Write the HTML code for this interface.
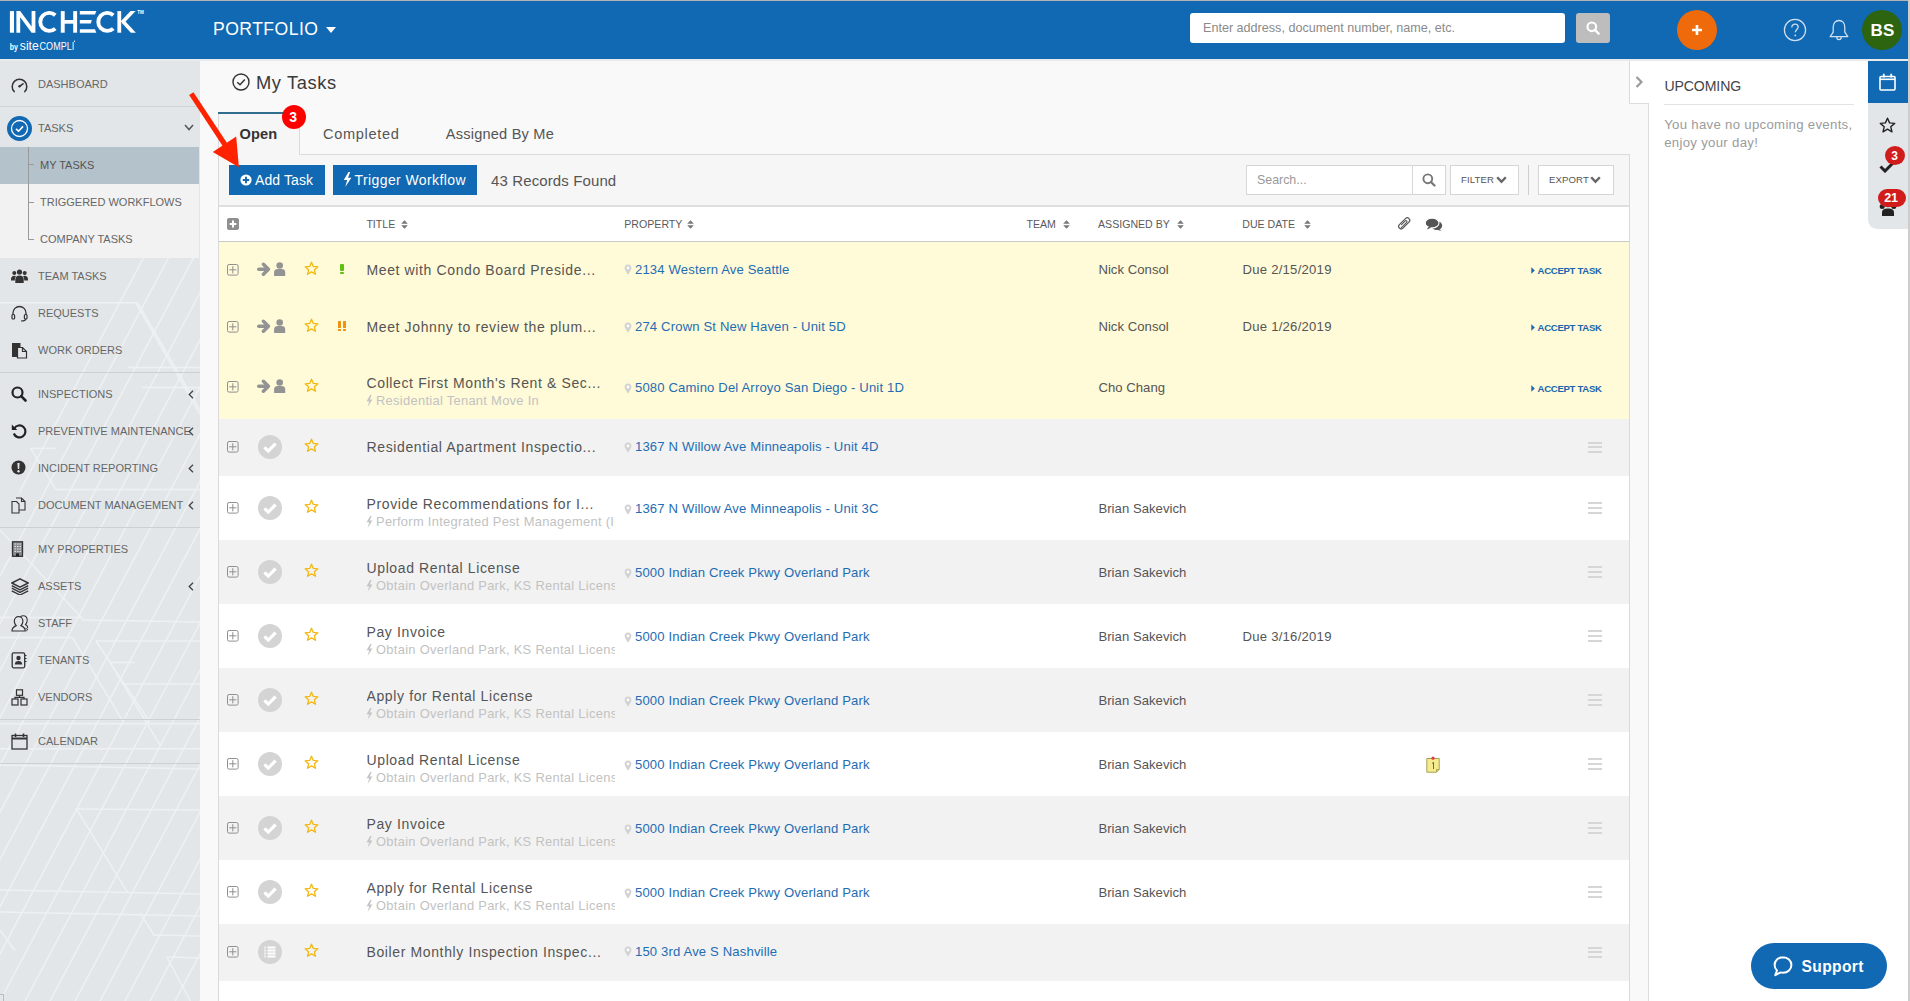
<!DOCTYPE html><html><head><meta charset="utf-8"><style>
*{box-sizing:border-box;margin:0;padding:0}
html,body{width:1910px;height:1001px;overflow:hidden;background:#f9f9f9;font-family:"Liberation Sans",sans-serif;color:#555}
div,span,svg{position:absolute}
.t{white-space:nowrap;line-height:1}
</style></head><body><div style="left:0px;top:0px;width:1910px;height:1px;background:#b4b4b4"></div>
<div style="left:0px;top:1px;width:1908px;height:58px;background:#1168b3"></div>
<div style="left:0px;top:59px;width:1908px;height:2px;background:#e9eaeb"></div>
<div style="left:1908px;top:0px;width:2px;height:1001px;background:#cdcdcd"></div>
<svg style="left:0px;top:0px;" width="150" height="56" viewBox="0 0 150 56"><g fill="#fff"><rect x="9.9" y="11.1" width="4.1" height="21.6"/><path d="M16.4 32.7V11.1H20.2L31.6 26.6V11.1H35.4V32.7H31.6L20.2 17.2V32.7Z"/><rect x="60.8" y="11.1" width="3.9" height="21.6"/><rect x="73.2" y="11.1" width="3.9" height="21.6"/><rect x="64" y="20" width="10" height="3.7"/><path d="M79.8 11.1H96.3L95 14.6H79.8Z"/><path d="M79.8 20H91.8L90.8 23.6H79.8Z"/><path d="M79.8 29.2H95L96.3 32.7H79.8Z"/><path d="M117.4 11.1H121.2V32.7H117.4Z"/><path d="M120.5 21.5L130.6 11.1H135.6L123.5 23.8Z"/><path d="M124.3 20.2L135.9 32.7H130.9L121.8 23Z"/></g><g fill="none" stroke="#fff" stroke-width="3.9"><path d="M55.3 15.2A9 9 0 1 0 55.3 28.6"/><path d="M113.3 15.2A9 9 0 1 0 113.3 28.6"/></g><text x="137.3" y="14.4" font-size="4.6" font-weight="700" fill="#fff" font-family="Liberation Sans">TM</text><text x="9.8" y="50.2" font-size="8.6" font-weight="700" fill="#fff" font-family="Liberation Sans" textLength="8.2" lengthAdjust="spacingAndGlyphs">by</text><text x="19.8" y="49.6" font-size="12.4" fill="#fff" font-family="Liberation Sans" textLength="19" lengthAdjust="spacingAndGlyphs">site</text><text x="39.6" y="49.6" font-size="10.4" fill="#fff" font-family="Liberation Sans" textLength="34.6" lengthAdjust="spacingAndGlyphs">COMPLI</text><circle cx="74.5" cy="41.2" r="0.7" fill="#fff"/></svg>
<span class="t" style="left:213px;top:21.2px;font-size:17.6px;color:#fff;font-weight:400;letter-spacing:0.45px">PORTFOLIO</span>
<svg style="left:326px;top:27px;" width="10" height="6" viewBox="0 0 10 6"><path d="M0 0H10L5 6Z" fill="#fff"/></svg>
<div style="left:1190px;top:13px;width:375px;height:30px;background:#fff;border-radius:3px"></div>
<span class="t" style="left:1203px;top:22.16px;font-size:12.6px;color:#8a8a8a;font-weight:400;">Enter address, document number, name, etc.</span>
<div style="left:1576px;top:13px;width:34px;height:30px;background:#bdbdbd;border-radius:3px"></div>
<svg style="left:1586px;top:21px;" width="14" height="14" viewBox="0 0 14 14"><circle cx="5.8" cy="5.8" r="4.3" stroke="#fff" stroke-width="2.2" fill="none"/><path d="M9 9L12.6 12.6" stroke="#fff" stroke-width="2.4" stroke-linecap="round"/></svg>
<div style="left:1677px;top:10px;width:40px;height:40px;background:#ee6a0a;border-radius:50%"></div>
<svg style="left:1691px;top:24px;" width="12" height="12" viewBox="0 0 12 12"><path d="M6 1V11M1 6H11" stroke="#fff" stroke-width="2.6"/></svg>
<svg style="left:1783px;top:18px;" width="24" height="24" viewBox="0 0 24 24"><circle cx="12" cy="12" r="10.6" stroke="#cfdff0" stroke-width="1.25" fill="none"/><path d="M8.8 9.4C8.8 7.4 10.2 6.2 12 6.2C13.8 6.2 15.2 7.4 15.2 9.1C15.2 11.3 12.3 11.6 12.3 14.2" stroke="#cfdff0" stroke-width="1.3" fill="none"/><circle cx="12.3" cy="17.4" r="0.95" fill="#cfdff0"/></svg>
<svg style="left:1828px;top:19px;" width="22" height="23" viewBox="0 0 22 23"><path d="M11 1.5C7.4 1.5 5.2 4.3 5.2 8.2V13.2L2.2 17.6H19.8L16.8 13.2V8.2C16.8 4.3 14.6 1.5 11 1.5Z" stroke="#cfdff0" stroke-width="1.3" fill="none" stroke-linejoin="round"/><path d="M8.8 18C8.8 19.6 9.8 20.6 11 20.6C12.2 20.6 13.2 19.6 13.2 18" stroke="#cfdff0" stroke-width="1.3" fill="none"/></svg>
<div style="left:1862px;top:10px;width:40px;height:40px;background:#2c6410;border-radius:50%"></div>
<span class="t" style="left:1870.5px;top:22.18px;font-size:17px;color:#fff;font-weight:700;letter-spacing:0.3px">BS</span>
<div style="left:0px;top:61px;width:200px;height:940px;background:#e2e6e9;overflow:hidden"></div>
<svg stroke="#eef1f3" stroke-width="1.5" style="left:0px;top:258px;" width="200" height="743" viewBox="0 258 200 743"><defs><clipPath id="pc"><path d="M139 258H200V1001H0V560L31.8 448Z"/></clipPath></defs><line x1="-450" y1="1001" x2="80" y2="0" clip-path="url(#pc)"/><line x1="-425" y1="1001" x2="105" y2="0" clip-path="url(#pc)"/><line x1="-400" y1="1001" x2="130" y2="0" clip-path="url(#pc)"/><line x1="-375" y1="1001" x2="155" y2="0" clip-path="url(#pc)"/><line x1="-350" y1="1001" x2="180" y2="0" clip-path="url(#pc)"/><line x1="-325" y1="1001" x2="205" y2="0" clip-path="url(#pc)"/><line x1="-300" y1="1001" x2="230" y2="0" clip-path="url(#pc)"/><line x1="-275" y1="1001" x2="255" y2="0" clip-path="url(#pc)"/><line x1="-250" y1="1001" x2="280" y2="0" clip-path="url(#pc)"/><line x1="-225" y1="1001" x2="305" y2="0" clip-path="url(#pc)"/><line x1="-200" y1="1001" x2="330" y2="0" clip-path="url(#pc)"/><line x1="-175" y1="1001" x2="355" y2="0" clip-path="url(#pc)"/><line x1="-150" y1="1001" x2="380" y2="0" clip-path="url(#pc)"/><line x1="-125" y1="1001" x2="405" y2="0" clip-path="url(#pc)"/><line x1="-100" y1="1001" x2="430" y2="0" clip-path="url(#pc)"/><line x1="-75" y1="1001" x2="455" y2="0" clip-path="url(#pc)"/><line x1="-50" y1="1001" x2="480" y2="0" clip-path="url(#pc)"/><line x1="-25" y1="1001" x2="505" y2="0" clip-path="url(#pc)"/><line x1="0" y1="1001" x2="530" y2="0" clip-path="url(#pc)"/><line x1="25" y1="1001" x2="555" y2="0" clip-path="url(#pc)"/><line x1="50" y1="1001" x2="580" y2="0" clip-path="url(#pc)"/><line x1="75" y1="1001" x2="605" y2="0" clip-path="url(#pc)"/><line x1="100" y1="1001" x2="630" y2="0" clip-path="url(#pc)"/><line x1="125" y1="1001" x2="655" y2="0" clip-path="url(#pc)"/><line x1="150" y1="1001" x2="680" y2="0" clip-path="url(#pc)"/><line x1="175" y1="1001" x2="705" y2="0" clip-path="url(#pc)"/><line x1="200" y1="1001" x2="730" y2="0" clip-path="url(#pc)"/><line x1="225" y1="1001" x2="755" y2="0" clip-path="url(#pc)"/><line x1="250" y1="1001" x2="780" y2="0" clip-path="url(#pc)"/><line x1="275" y1="1001" x2="805" y2="0" clip-path="url(#pc)"/><line x1="300" y1="1001" x2="830" y2="0" clip-path="url(#pc)"/><line x1="325" y1="1001" x2="855" y2="0" clip-path="url(#pc)"/><line x1="350" y1="1001" x2="880" y2="0" clip-path="url(#pc)"/><line x1="375" y1="1001" x2="905" y2="0" clip-path="url(#pc)"/><line x1="400" y1="1001" x2="930" y2="0" clip-path="url(#pc)"/><line x1="425" y1="1001" x2="955" y2="0" clip-path="url(#pc)"/><line x1="450" y1="1001" x2="980" y2="0" clip-path="url(#pc)"/><line x1="475" y1="1001" x2="1005" y2="0" clip-path="url(#pc)"/><line x1="500" y1="1001" x2="1030" y2="0" clip-path="url(#pc)"/><line x1="525" y1="1001" x2="1055" y2="0" clip-path="url(#pc)"/><line x1="550" y1="1001" x2="1080" y2="0" clip-path="url(#pc)"/><line x1="575" y1="1001" x2="1105" y2="0" clip-path="url(#pc)"/><line x1="0" y1="302.7" x2="137.7" y2="302.7" /><line x1="128" y1="367.6" x2="200" y2="367.6" /><line x1="141.7" y1="387.5" x2="200" y2="387.5" /><line x1="30" y1="448.4" x2="55.6" y2="448.4" /><line x1="55.6" y1="489.4" x2="200" y2="489.4" /><line x1="0" y1="617.5" x2="82" y2="617.5" /><line x1="82" y1="620" x2="200" y2="622" /><line x1="0" y1="637.5" x2="72" y2="637.5" /><line x1="96" y1="641" x2="200" y2="641" /><line x1="110" y1="662.5" x2="135" y2="662.5" /><line x1="122" y1="684" x2="200" y2="684" /><line x1="0" y1="723.7" x2="200" y2="723.7" /><line x1="0" y1="748.7" x2="200" y2="748.7" /><line x1="0" y1="765" x2="200" y2="769" /><line x1="75" y1="809" x2="200" y2="810" /><line x1="0" y1="890" x2="200" y2="894" /><line x1="0" y1="912" x2="200" y2="916" /><line x1="153" y1="935" x2="200" y2="936" /><line x1="168" y1="957" x2="200" y2="958" /><line x1="136.4" y1="304" x2="200" y2="414" /><line x1="30.5" y1="448" x2="55.6" y2="489" /><line x1="0" y1="530" x2="82.5" y2="618.7" /><line x1="72.5" y1="637.5" x2="123.7" y2="722.5" /><line x1="96" y1="641" x2="150" y2="722.5" /><line x1="110" y1="662.5" x2="160" y2="745" /><line x1="76.4" y1="809" x2="127.8" y2="892.9" /><line x1="140" y1="913" x2="154" y2="935" /><line x1="166.7" y1="956.8" x2="190.5" y2="1001" /><line x1="0" y1="930" x2="15" y2="950.5" /><line x1="137.7" y1="302.7" x2="200" y2="410" /></svg>
<div style="left:-1px;top:994px;width:5px;height:10px;border:1px solid #b8bcbf;background:#e4e7ea"></div>
<div style="left:0px;top:106px;width:200px;height:1px;background:#cfd3d6"></div>
<span class="t" style="left:38px;top:78.76px;font-size:11px;color:#666;font-weight:400;letter-spacing:0px">DASHBOARD</span>
<svg style="left:11px;top:77px;" width="17" height="16" viewBox="0 0 17 16"><path d="M3.2 14.6A7.3 7.3 0 1 1 13.8 14.6" stroke="#333" stroke-width="1.5" fill="none" stroke-linecap="round"/><path d="M8.5 9.3L12 6.8" stroke="#333" stroke-width="1.6" stroke-linecap="round"/><circle cx="8.5" cy="9.3" r="1.2" fill="#333"/></svg>
<div style="left:0px;top:107px;width:200px;height:40px;background:#e2e6e9"></div>
<div style="left:7px;top:116px;width:25px;height:25px;background:#1168b3;border-radius:50%"></div>
<svg style="left:7px;top:116px;" width="25" height="25" viewBox="0 0 25 25"><circle cx="12.5" cy="12.5" r="8" stroke="#fff" stroke-width="1.3" fill="none"/><path d="M9 12.8L11.6 15.2L16 10.4" stroke="#fff" stroke-width="1.6" fill="none"/></svg>
<span class="t" style="left:38px;top:122.76px;font-size:11px;color:#666;font-weight:400;letter-spacing:0px">TASKS</span>
<svg style="left:184px;top:124px;" width="10" height="7" viewBox="0 0 10 7"><path d="M1 1L5 5.5L9 1" stroke="#555" stroke-width="1.5" fill="none"/></svg>
<div style="left:0px;top:147px;width:199px;height:111px;background:#f2f2f2"></div>
<div style="left:0px;top:147px;width:199px;height:37px;background:#b4c2cc"></div>
<div style="left:28px;top:147px;width:1px;height:93px;background:#9a9a9a"></div>
<div style="left:28px;top:164px;width:6px;height:1px;background:#9a9a9a"></div>
<div style="left:28px;top:202px;width:6px;height:1px;background:#9a9a9a"></div>
<div style="left:28px;top:239px;width:6px;height:1px;background:#9a9a9a"></div>
<span class="t" style="left:40px;top:160.16px;font-size:11px;color:#555;font-weight:400;letter-spacing:0px">MY TASKS</span>
<span class="t" style="left:40px;top:196.86px;font-size:11px;color:#666;font-weight:400;letter-spacing:0px">TRIGGERED WORKFLOWS</span>
<span class="t" style="left:40px;top:233.56px;font-size:11px;color:#666;font-weight:400;letter-spacing:0px">COMPANY TASKS</span>
<span class="t" style="left:38px;top:270.76px;font-size:11px;color:#666;font-weight:400;letter-spacing:0px">TEAM TASKS</span>
<svg style="left:11px;top:268px;fill:#333" width="18" height="17" viewBox="0 0 18 17"><circle cx="8.5" cy="4" r="2.6"/><circle cx="3.3" cy="5" r="2"/><circle cx="13.7" cy="5" r="2"/><path d="M4.3 15V11.5C4.3 8.8 6 7.5 8.5 7.5C11 7.5 12.7 8.8 12.7 11.5V15Z"/><path d="M0 11.5C0 9 1.3 7.8 3.3 7.8C4 7.8 4.5 8 5 8.3C4.2 9.2 3.8 10.3 3.8 11.6V12.5H0Z"/><path d="M17 11.5C17 9 15.7 7.8 13.7 7.8C13 7.8 12.5 8 12 8.3C12.8 9.2 13.2 10.3 13.2 11.6V12.5H17Z"/></svg>
<span class="t" style="left:38px;top:307.76px;font-size:11px;color:#666;font-weight:400;letter-spacing:0px">REQUESTS</span>
<svg style="left:11px;top:305px;fill:#333" width="18" height="17" viewBox="0 0 18 17"><path d="M2 10V8A6.5 6.5 0 0 1 15 8V10" stroke="#333" stroke-width="1.3" fill="none"/><rect x="1" y="9.5" width="2.6" height="4.5" rx="1" stroke="#333" stroke-width="1.2" fill="none"/><rect x="13.4" y="9.5" width="2.6" height="4.5" rx="1" stroke="#333" stroke-width="1.2" fill="none"/><path d="M14.7 14C14.7 15.6 12.5 16 10 16" stroke="#333" stroke-width="1.2" fill="none"/></svg>
<span class="t" style="left:38px;top:344.76px;font-size:11px;color:#666;font-weight:400;letter-spacing:0px">WORK ORDERS</span>
<svg style="left:11px;top:342px;fill:#333" width="18" height="17" viewBox="0 0 18 17"><path d="M1 1H9.5V5H6V15H1Z"/><path d="M6.5 5.5H11.5L15.5 9.5V16H6.5Z" stroke="#333" stroke-width="1.2" fill="#e2e6e9"/><path d="M11.5 5.5V9.5H15.5" stroke="#333" stroke-width="1.2" fill="none"/></svg>
<span class="t" style="left:38px;top:388.86px;font-size:11px;color:#666;font-weight:400;letter-spacing:0px">INSPECTIONS</span>
<svg style="left:11px;top:386px;fill:#333" width="18" height="17" viewBox="0 0 18 17"><circle cx="6.5" cy="6.5" r="5" stroke="#222" stroke-width="2.2" fill="none"/><path d="M10.2 10.2L14.5 14.5" stroke="#222" stroke-width="2.6" stroke-linecap="round"/></svg>
<span class="t" style="left:38px;top:425.86px;font-size:11px;color:#666;font-weight:400;letter-spacing:0px">PREVENTIVE MAINTENANCE</span>
<svg style="left:11px;top:423px;fill:#333" width="18" height="17" viewBox="0 0 18 17"><path d="M3.2 5.5A6 6 0 1 1 2.8 10.5" stroke="#222" stroke-width="2.2" fill="none"/><path d="M0.8 1.5V7H6.3Z" fill="#222"/></svg>
<span class="t" style="left:38px;top:462.86px;font-size:11px;color:#666;font-weight:400;letter-spacing:0px">INCIDENT REPORTING</span>
<svg style="left:11px;top:460px;fill:#333" width="18" height="17" viewBox="0 0 18 17"><circle cx="7.5" cy="7.5" r="7"/><path d="M6.4 3H8.6L8.2 9H6.8Z" fill="#e2e6e9"/><circle cx="7.5" cy="11.2" r="1.2" fill="#e2e6e9"/></svg>
<span class="t" style="left:38px;top:499.86px;font-size:11px;color:#666;font-weight:400;letter-spacing:0px">DOCUMENT MANAGEMENT</span>
<svg style="left:11px;top:497px;fill:#333" width="18" height="17" viewBox="0 0 18 17"><path d="M1 4.5H5.5L8 7V16H1Z" stroke="#333" stroke-width="1.1" fill="none"/><path d="M5 1H10.5L14 4.5V13H8" stroke="#333" stroke-width="1.1" fill="none"/><path d="M10.5 1V4.5H14" stroke="#333" stroke-width="1.1" fill="none"/></svg>
<span class="t" style="left:38px;top:544.06px;font-size:11px;color:#666;font-weight:400;letter-spacing:0px">MY PROPERTIES</span>
<svg style="left:11px;top:541px;fill:#333" width="18" height="17" viewBox="0 0 18 17"><rect x="1.5" y="0.8" width="10" height="14.5" stroke="#333" stroke-width="1.3" fill="#8a8d90"/><path d="M3.5 3H5M6 3H7.5M8.5 3H10M3.5 5.5H5M6 5.5H7.5M8.5 5.5H10M3.5 8H5M6 8H7.5M8.5 8H10M3.5 10.5H5M6 10.5H7.5M8.5 10.5H10" stroke="#e2e6e9" stroke-width="1.2"/><rect x="5" y="12.3" width="3" height="3" fill="#222"/></svg>
<span class="t" style="left:38px;top:581.06px;font-size:11px;color:#666;font-weight:400;letter-spacing:0px">ASSETS</span>
<svg style="left:11px;top:578px;fill:#333" width="18" height="17" viewBox="0 0 18 17"><path d="M9 0.8L17.2 5L9 9.2L0.8 5Z" fill="#e2e6e9" stroke="#333" stroke-width="1.5" stroke-linejoin="round"/><path d="M0.8 7.6L9 11.8L17.2 7.6M0.8 10.2L9 14.4L17.2 10.2M0.8 12.8L9 17L17.2 12.8" fill="none" stroke="#333" stroke-width="1.4" stroke-linejoin="round"/></svg>
<span class="t" style="left:38px;top:618.06px;font-size:11px;color:#666;font-weight:400;letter-spacing:0px">STAFF</span>
<svg style="left:11px;top:615px;fill:#333" width="18" height="17" viewBox="0 0 18 17"><path d="M1 16C1 12.8 3.2 11.4 5.2 10.6C3.9 9.5 3.3 8 3.3 6.2C3.3 3.5 5.2 1.6 7.6 1.6C10 1.6 11.9 3.5 11.9 6.2C11.9 8 11.3 9.5 10 10.6C12 11.4 14.2 12.8 14.2 16Z" stroke="#333" stroke-width="1.2" fill="none"/><path d="M9.5 1.8C10.2 1.1 11 0.8 12 0.8C14.4 0.8 16.2 2.7 16.2 5.3C16.2 7.1 15.6 8.5 14.4 9.6C15.8 10.2 16.8 11.5 16.8 13.2" stroke="#333" stroke-width="1.1" fill="none"/><path d="M14.4 13.2L16.8 14.6L15.2 16" stroke="#333" stroke-width="1" fill="none"/></svg>
<span class="t" style="left:38px;top:655.06px;font-size:11px;color:#666;font-weight:400;letter-spacing:0px">TENANTS</span>
<svg style="left:11px;top:652px;fill:#333" width="18" height="17" viewBox="0 0 18 17"><rect x="1.2" y="0.8" width="12.5" height="15" rx="1.5" stroke="#333" stroke-width="1.3" fill="none"/><circle cx="7.5" cy="6" r="2.2"/><path d="M3.8 12.5C3.8 10 5.3 9 7.5 9C9.7 9 11.2 10 11.2 12.5Z"/><path d="M14 3.5H15.5M14 6.5H15.5M14 9.5H15.5" stroke="#333" stroke-width="1.2"/></svg>
<span class="t" style="left:38px;top:692.06px;font-size:11px;color:#666;font-weight:400;letter-spacing:0px">VENDORS</span>
<svg style="left:11px;top:689px;fill:#333" width="18" height="17" viewBox="0 0 18 17"><rect x="5.5" y="0.8" width="6" height="5.5" stroke="#333" stroke-width="1.2" fill="none"/><rect x="1" y="10" width="6" height="6" stroke="#333" stroke-width="1.2" fill="none"/><rect x="10" y="10" width="6" height="6" stroke="#333" stroke-width="1.2" fill="none"/><path d="M8.5 6.3V8.3H4V10M8.5 8.3H13V10" stroke="#333" stroke-width="1.2" fill="none"/></svg>
<span class="t" style="left:38px;top:735.76px;font-size:11px;color:#666;font-weight:400;letter-spacing:0px">CALENDAR</span>
<svg style="left:11px;top:733px;fill:#333" width="18" height="17" viewBox="0 0 18 17"><rect x="1" y="2.5" width="15" height="13.5" stroke="#333" stroke-width="1.3" fill="none"/><path d="M1 5.5H16" stroke="#333" stroke-width="2"/><path d="M4.5 0.5V4M12.5 0.5V4" stroke="#333" stroke-width="1.6"/></svg>
<svg style="left:188px;top:390px;" width="6" height="9" viewBox="0 0 6 9"><path d="M5 0.7L1.2 4.5L5 8.3" stroke="#444" stroke-width="1.3" fill="none"/></svg>
<svg style="left:188px;top:427px;" width="6" height="9" viewBox="0 0 6 9"><path d="M5 0.7L1.2 4.5L5 8.3" stroke="#444" stroke-width="1.3" fill="none"/></svg>
<svg style="left:188px;top:464px;" width="6" height="9" viewBox="0 0 6 9"><path d="M5 0.7L1.2 4.5L5 8.3" stroke="#444" stroke-width="1.3" fill="none"/></svg>
<svg style="left:188px;top:501px;" width="6" height="9" viewBox="0 0 6 9"><path d="M5 0.7L1.2 4.5L5 8.3" stroke="#444" stroke-width="1.3" fill="none"/></svg>
<svg style="left:188px;top:582px;" width="6" height="9" viewBox="0 0 6 9"><path d="M5 0.7L1.2 4.5L5 8.3" stroke="#444" stroke-width="1.3" fill="none"/></svg>
<div style="left:0px;top:372px;width:200px;height:1px;background:#cdd0d2"></div>
<div style="left:0px;top:527px;width:200px;height:1px;background:#cdd0d2"></div>
<div style="left:0px;top:719px;width:200px;height:1px;background:#cdd0d2"></div>
<div style="left:0px;top:763px;width:200px;height:1px;background:#cdd0d2"></div>
<svg style="left:232px;top:73px;" width="18" height="18" viewBox="0 0 18 18"><circle cx="9" cy="9" r="8" stroke="#333" stroke-width="1.4" fill="none"/><path d="M5.3 9.2L8 11.8L12.8 6.6" stroke="#333" stroke-width="1.5" fill="none"/></svg>
<span class="t" style="left:256px;top:73.61px;font-size:18.3px;color:#3a3a3a;font-weight:400;letter-spacing:0.6px">My Tasks</span>
<div style="left:218px;top:112px;width:81px;height:2px;background:#2f6e8d"></div>
<div style="left:218px;top:114px;width:1px;height:887px;background:#dadada"></div>
<div style="left:299px;top:114px;width:1px;height:41px;background:#dcdcdc"></div>
<div style="left:299px;top:154px;width:1331px;height:1px;background:#dcdcdc"></div>
<div style="left:219px;top:114px;width:80px;height:41px;background:#f6f6f6"></div>
<div style="left:219px;top:155px;width:1410px;height:50px;background:#f6f6f6"></div>
<div style="left:1629px;top:154px;width:1px;height:847px;background:#dadada"></div>
<div style="left:219px;top:205px;width:1410px;height:2px;background:#dedede"></div>
<div style="left:219px;top:207px;width:1410px;height:34px;background:#fff"></div>
<div style="left:219px;top:241px;width:1410px;height:1px;background:#cacaca"></div>
<span class="t" style="left:239.5px;top:127.29px;font-size:14.6px;color:#333;font-weight:700;letter-spacing:0.1px">Open</span>
<span class="t" style="left:323px;top:127.29px;font-size:14.6px;color:#555;font-weight:400;letter-spacing:0.65px">Completed</span>
<span class="t" style="left:445.8px;top:127.29px;font-size:14.6px;color:#555;font-weight:400;letter-spacing:0.2px">Assigned By Me</span>
<div style="left:282px;top:105px;width:24px;height:24px;background:#f00;border-radius:50%"></div>
<span class="t" style="left:289.3px;top:109.67px;font-size:14px;color:#fff;font-weight:700;">3</span>
<div style="left:229px;top:165px;width:96px;height:30px;background:#1168b3"></div>
<svg style="left:240px;top:174px;" width="12" height="12" viewBox="0 0 12 12"><circle cx="6" cy="6" r="5.6" fill="#fff"/><path d="M6 2.8V9.2M2.8 6H9.2" stroke="#1168b3" stroke-width="1.9"/></svg>
<span class="t" style="left:255px;top:172.67px;font-size:14px;color:#fff;font-weight:400;letter-spacing:0.1px">Add Task</span>
<div style="left:333px;top:165px;width:144px;height:30px;background:#1168b3"></div>
<svg style="left:343px;top:172px;" width="9" height="15" viewBox="0 0 9 15"><path d="M5.5 0L0.8 8H4.2L2.2 15L8.4 5.8H5L7.2 0Z" fill="#fff"/></svg>
<span class="t" style="left:354.5px;top:172.67px;font-size:14px;color:#fff;font-weight:400;letter-spacing:0.4px">Trigger Workflow</span>
<span class="t" style="left:491px;top:172.54px;font-size:15px;color:#555;font-weight:400;letter-spacing:0.12px">43 Records Found</span>
<div style="left:1246px;top:165px;width:167px;height:30px;background:#fff;border:1px solid #d6d6d6"></div>
<span class="t" style="left:1257px;top:174.18px;font-size:12.4px;color:#999;font-weight:400;">Search...</span>
<div style="left:1412px;top:165px;width:34px;height:30px;background:#fff;border:1px solid #d6d6d6"></div>
<svg style="left:1422px;top:173px;" width="14" height="14" viewBox="0 0 14 14"><circle cx="5.8" cy="5.8" r="4.4" stroke="#777" stroke-width="1.9" fill="none"/><path d="M9 9L12.5 12.5" stroke="#777" stroke-width="2.2" stroke-linecap="round"/></svg>
<div style="left:1450px;top:165px;width:69px;height:30px;background:#fff;border:1px solid #d6d6d6"></div>
<span class="t" style="left:1461px;top:175.25px;font-size:9.6px;color:#555;font-weight:400;letter-spacing:0.1px">FILTER</span>
<svg style="left:1496px;top:176px;" width="11" height="8" viewBox="0 0 11 8"><path d="M1.2 1.2L5.5 5.8L9.8 1.2" stroke="#666" stroke-width="2.4" fill="none"/></svg>
<div style="left:1528px;top:165px;width:1px;height:30px;background:#cfcfcf"></div>
<div style="left:1538px;top:165px;width:76px;height:30px;background:#fff;border:1px solid #d6d6d6"></div>
<span class="t" style="left:1549px;top:175.25px;font-size:9.6px;color:#555;font-weight:400;letter-spacing:0.1px">EXPORT</span>
<svg style="left:1590px;top:176px;" width="11" height="8" viewBox="0 0 11 8"><path d="M1.2 1.2L5.5 5.8L9.8 1.2" stroke="#666" stroke-width="2.4" fill="none"/></svg>
<svg style="left:227px;top:218px;" width="12" height="12" viewBox="0 0 12 12"><rect x="0" y="0" width="12" height="12" rx="2" fill="#8f8f8f"/><path d="M6 2.6V9.4M2.6 6H9.4" stroke="#fff" stroke-width="2"/></svg>
<span class="t" style="left:366.4px;top:219.12px;font-size:10.6px;color:#5a5a5a;font-weight:400;letter-spacing:0px">TITLE</span>
<svg style="left:400.5px;top:219.8px;" width="7" height="9" viewBox="0 0 7 9"><path d="M0.2 3.7L3.5 0.2L6.8 3.7Z M0.2 5.3L3.5 8.8L6.8 5.3Z" fill="#777"/></svg>
<span class="t" style="left:624.3px;top:219.12px;font-size:10.6px;color:#5a5a5a;font-weight:400;letter-spacing:0px">PROPERTY</span>
<svg style="left:686.5px;top:219.8px;" width="7" height="9" viewBox="0 0 7 9"><path d="M0.2 3.7L3.5 0.2L6.8 3.7Z M0.2 5.3L3.5 8.8L6.8 5.3Z" fill="#777"/></svg>
<span class="t" style="left:1026.5px;top:219.12px;font-size:10.6px;color:#5a5a5a;font-weight:400;letter-spacing:0px">TEAM</span>
<svg style="left:1062.5px;top:219.8px;" width="7" height="9" viewBox="0 0 7 9"><path d="M0.2 3.7L3.5 0.2L6.8 3.7Z M0.2 5.3L3.5 8.8L6.8 5.3Z" fill="#777"/></svg>
<span class="t" style="left:1098px;top:219.12px;font-size:10.6px;color:#5a5a5a;font-weight:400;letter-spacing:0px">ASSIGNED BY</span>
<svg style="left:1176.5px;top:219.8px;" width="7" height="9" viewBox="0 0 7 9"><path d="M0.2 3.7L3.5 0.2L6.8 3.7Z M0.2 5.3L3.5 8.8L6.8 5.3Z" fill="#777"/></svg>
<span class="t" style="left:1242.3px;top:219.12px;font-size:10.6px;color:#5a5a5a;font-weight:400;letter-spacing:0px">DUE DATE</span>
<svg style="left:1303.5px;top:219.8px;" width="7" height="9" viewBox="0 0 7 9"><path d="M0.2 3.7L3.5 0.2L6.8 3.7Z M0.2 5.3L3.5 8.8L6.8 5.3Z" fill="#777"/></svg>
<svg style="left:1395px;top:215px;" width="17" height="17" viewBox="0 0 17 17"><g transform="translate(14 3.6) rotate(45)"><rect x="-2.5" y="0" width="5" height="13.6" rx="2.5" stroke="#555" stroke-width="1.15" fill="none"/><path d="M-1.05 10V4.3A1.05 1.05 0 0 1 1.05 4.3V13.4" stroke="#555" stroke-width="1.1" fill="none"/></g></svg>
<svg style="left:1425px;top:217px;" width="18" height="15" viewBox="0 0 18 15"><ellipse cx="11.8" cy="8.6" rx="5.4" ry="4.3" fill="#555"/><path d="M13.5 11.5L16.5 14L11 12.5Z" fill="#555"/><ellipse cx="7.1" cy="6" rx="6.9" ry="4.9" fill="#555" stroke="#fff" stroke-width="1.1"/><path d="M3.6 9.8L1.8 12.5L6.5 10.6Z" fill="#555"/></svg>
<div style="left:219px;top:242px;width:1410px;height:57px;background:#fffad7"></div>
<svg style="left:227px;top:264px;" width="12" height="12" viewBox="0 0 12 12"><rect x="0.5" y="0.5" width="10.6" height="10.6" rx="1.6" stroke="#8f8f8f" stroke-width="1" fill="none"/><path d="M5.8 2.2V9.4M2.2 5.8H9.4" stroke="#8f8f8f" stroke-width="1"/></svg>
<svg style="left:257px;top:262px;" width="30" height="15" viewBox="0 0 30 15"><path d="M1.8 7.3H10" stroke="#939393" stroke-width="3.6" stroke-linecap="round"/><path d="M6.4 2.3L11.4 7.3L6.4 12.3" stroke="#939393" stroke-width="3.4" fill="none" stroke-linecap="round" stroke-linejoin="round"/><circle cx="22.7" cy="3.5" r="3.3" fill="#939393"/><path d="M17.1 14V10.2C17.1 7.8 18.8 6.9 20.6 6.9H24.8C26.6 6.9 28.2 7.8 28.2 10.2V14Z" fill="#939393"/></svg>
<svg style="left:304px;top:261px;" width="15" height="15" viewBox="0 0 15 15"><path d="M7.5 1.2L9.3 5.4L13.9 5.8L10.4 8.8L11.5 13.3L7.5 10.9L3.5 13.3L4.6 8.8L1.1 5.8L5.7 5.4Z" stroke="#f2b810" stroke-width="1.3" fill="none" stroke-linejoin="round"/></svg>
<div style="left:340px;top:264px;width:3.6px;height:6.5px;background:#5cc10f;border-radius:1px"></div>
<div style="left:340px;top:272px;width:3.6px;height:2.3px;background:#5cc10f;border-radius:1px"></div>
<span class="t" style="left:366.5px;top:263.17px;font-size:14px;color:#555;letter-spacing:0.62px;width:248px;overflow:hidden;padding-bottom:4px">Meet with Condo Board Preside...</span>
<svg style="left:624px;top:264px;" width="8" height="11" viewBox="0 0 8 11"><path d="M4 0.6C2 0.6 0.6 2 0.6 4C0.6 6.2 4 10.6 4 10.6C4 10.6 7.4 6.2 7.4 4C7.4 2 6 0.6 4 0.6Z" fill="#d3d3d3"/><circle cx="4" cy="4" r="1.4" fill="#fff"/></svg>
<span class="t" style="left:635px;top:262.79px;font-size:13.1px;color:#1f6db3;font-weight:400;letter-spacing:0.15px">2134 Western Ave Seattle</span>
<span class="t" style="left:1098.4px;top:262.79px;font-size:13.1px;color:#555;font-weight:400;letter-spacing:0.05px">Nick Consol</span>
<span class="t" style="left:1242.5px;top:262.79px;font-size:13.1px;color:#555;font-weight:400;letter-spacing:0.25px">Due 2/15/2019</span>
<svg style="left:1530.5px;top:267px;" width="4" height="7" viewBox="0 0 4 7"><path d="M0.3 0.3L3.8 3.5L0.3 6.7Z" fill="#1a66ad"/></svg>
<span class="t" style="left:1537.5px;top:265.55px;font-size:9.6px;color:#1a66ad;font-weight:700;letter-spacing:-0.3px">ACCEPT TASK</span>
<div style="left:219px;top:299px;width:1410px;height:56px;background:#fffad7"></div>
<svg style="left:227px;top:321px;" width="12" height="12" viewBox="0 0 12 12"><rect x="0.5" y="0.5" width="10.6" height="10.6" rx="1.6" stroke="#8f8f8f" stroke-width="1" fill="none"/><path d="M5.8 2.2V9.4M2.2 5.8H9.4" stroke="#8f8f8f" stroke-width="1"/></svg>
<svg style="left:257px;top:319px;" width="30" height="15" viewBox="0 0 30 15"><path d="M1.8 7.3H10" stroke="#939393" stroke-width="3.6" stroke-linecap="round"/><path d="M6.4 2.3L11.4 7.3L6.4 12.3" stroke="#939393" stroke-width="3.4" fill="none" stroke-linecap="round" stroke-linejoin="round"/><circle cx="22.7" cy="3.5" r="3.3" fill="#939393"/><path d="M17.1 14V10.2C17.1 7.8 18.8 6.9 20.6 6.9H24.8C26.6 6.9 28.2 7.8 28.2 10.2V14Z" fill="#939393"/></svg>
<svg style="left:304px;top:318px;" width="15" height="15" viewBox="0 0 15 15"><path d="M7.5 1.2L9.3 5.4L13.9 5.8L10.4 8.8L11.5 13.3L7.5 10.9L3.5 13.3L4.6 8.8L1.1 5.8L5.7 5.4Z" stroke="#f2b810" stroke-width="1.3" fill="none" stroke-linejoin="round"/></svg>
<div style="left:338px;top:321px;width:3px;height:6.5px;background:#f0920f;border-radius:0.5px"></div>
<div style="left:338px;top:329px;width:3px;height:2.4px;background:#f0920f;border-radius:0.5px"></div>
<div style="left:343.2px;top:321px;width:3px;height:6.5px;background:#f0920f;border-radius:0.5px"></div>
<div style="left:343.2px;top:329px;width:3px;height:2.4px;background:#f0920f;border-radius:0.5px"></div>
<span class="t" style="left:366.5px;top:320.17px;font-size:14px;color:#555;letter-spacing:0.62px;width:248px;overflow:hidden;padding-bottom:4px">Meet Johnny to review the plum...</span>
<svg style="left:624px;top:322px;" width="8" height="11" viewBox="0 0 8 11"><path d="M4 0.6C2 0.6 0.6 2 0.6 4C0.6 6.2 4 10.6 4 10.6C4 10.6 7.4 6.2 7.4 4C7.4 2 6 0.6 4 0.6Z" fill="#d3d3d3"/><circle cx="4" cy="4" r="1.4" fill="#fff"/></svg>
<span class="t" style="left:635px;top:319.79px;font-size:13.1px;color:#1f6db3;font-weight:400;letter-spacing:0.15px">274 Crown St New Haven - Unit 5D</span>
<span class="t" style="left:1098.4px;top:319.79px;font-size:13.1px;color:#555;font-weight:400;letter-spacing:0.05px">Nick Consol</span>
<span class="t" style="left:1242.5px;top:319.79px;font-size:13.1px;color:#555;font-weight:400;letter-spacing:0.25px">Due 1/26/2019</span>
<svg style="left:1530.5px;top:324px;" width="4" height="7" viewBox="0 0 4 7"><path d="M0.3 0.3L3.8 3.5L0.3 6.7Z" fill="#1a66ad"/></svg>
<span class="t" style="left:1537.5px;top:322.55px;font-size:9.6px;color:#1a66ad;font-weight:700;letter-spacing:-0.3px">ACCEPT TASK</span>
<div style="left:219px;top:355px;width:1410px;height:64px;background:#fffad7"></div>
<svg style="left:227px;top:381px;" width="12" height="12" viewBox="0 0 12 12"><rect x="0.5" y="0.5" width="10.6" height="10.6" rx="1.6" stroke="#8f8f8f" stroke-width="1" fill="none"/><path d="M5.8 2.2V9.4M2.2 5.8H9.4" stroke="#8f8f8f" stroke-width="1"/></svg>
<svg style="left:257px;top:379px;" width="30" height="15" viewBox="0 0 30 15"><path d="M1.8 7.3H10" stroke="#939393" stroke-width="3.6" stroke-linecap="round"/><path d="M6.4 2.3L11.4 7.3L6.4 12.3" stroke="#939393" stroke-width="3.4" fill="none" stroke-linecap="round" stroke-linejoin="round"/><circle cx="22.7" cy="3.5" r="3.3" fill="#939393"/><path d="M17.1 14V10.2C17.1 7.8 18.8 6.9 20.6 6.9H24.8C26.6 6.9 28.2 7.8 28.2 10.2V14Z" fill="#939393"/></svg>
<svg style="left:304px;top:378px;" width="15" height="15" viewBox="0 0 15 15"><path d="M7.5 1.2L9.3 5.4L13.9 5.8L10.4 8.8L11.5 13.3L7.5 10.9L3.5 13.3L4.6 8.8L1.1 5.8L5.7 5.4Z" stroke="#f2b810" stroke-width="1.3" fill="none" stroke-linejoin="round"/></svg>
<span class="t" style="left:366.5px;top:376.17px;font-size:14px;color:#555;letter-spacing:0.62px;width:248px;overflow:hidden;padding-bottom:4px">Collect First Month's Rent &amp; Sec...</span>
<svg style="left:365.5px;top:395px;" width="7" height="12" viewBox="0 0 7 12"><path d="M4.2 0L0.6 6.2H3.2L1.6 12L6.4 4.6H3.8L5.6 0Z" fill="#c4c4c4"/></svg>
<span class="t" style="left:376px;top:394.58px;font-size:12.9px;color:#c2c2c2;letter-spacing:0.3px;width:239px;overflow:hidden;padding-bottom:4px">Residential Tenant Move In</span>
<svg style="left:624px;top:383px;" width="8" height="11" viewBox="0 0 8 11"><path d="M4 0.6C2 0.6 0.6 2 0.6 4C0.6 6.2 4 10.6 4 10.6C4 10.6 7.4 6.2 7.4 4C7.4 2 6 0.6 4 0.6Z" fill="#d3d3d3"/><circle cx="4" cy="4" r="1.4" fill="#fff"/></svg>
<span class="t" style="left:635px;top:380.89px;font-size:13.1px;color:#1f6db3;font-weight:400;letter-spacing:0.15px">5080 Camino Del Arroyo San Diego - Unit 1D</span>
<span class="t" style="left:1098.4px;top:380.89px;font-size:13.1px;color:#555;font-weight:400;letter-spacing:0.05px">Cho Chang</span>
<svg style="left:1530.5px;top:385px;" width="4" height="7" viewBox="0 0 4 7"><path d="M0.3 0.3L3.8 3.5L0.3 6.7Z" fill="#1a66ad"/></svg>
<span class="t" style="left:1537.5px;top:383.65px;font-size:9.6px;color:#1a66ad;font-weight:700;letter-spacing:-0.3px">ACCEPT TASK</span>
<div style="left:219px;top:419px;width:1410px;height:57px;background:#f2f2f2"></div>
<svg style="left:227px;top:441px;" width="12" height="12" viewBox="0 0 12 12"><rect x="0.5" y="0.5" width="10.6" height="10.6" rx="1.6" stroke="#8f8f8f" stroke-width="1" fill="none"/><path d="M5.8 2.2V9.4M2.2 5.8H9.4" stroke="#8f8f8f" stroke-width="1"/></svg>
<svg style="left:258px;top:435px;" width="24" height="24" viewBox="0 0 24 24"><circle cx="12" cy="12" r="12" fill="#d4d4d4"/><path d="M6.4 12.4L10.3 16.1L17.6 8.6" stroke="#fff" stroke-width="3.2" fill="none"/></svg>
<svg style="left:304px;top:438px;" width="15" height="15" viewBox="0 0 15 15"><path d="M7.5 1.2L9.3 5.4L13.9 5.8L10.4 8.8L11.5 13.3L7.5 10.9L3.5 13.3L4.6 8.8L1.1 5.8L5.7 5.4Z" stroke="#f2b810" stroke-width="1.3" fill="none" stroke-linejoin="round"/></svg>
<span class="t" style="left:366.5px;top:440.17px;font-size:14px;color:#555;letter-spacing:0.62px;width:248px;overflow:hidden;padding-bottom:4px">Residential Apartment Inspectio...</span>
<svg style="left:624px;top:442px;" width="8" height="11" viewBox="0 0 8 11"><path d="M4 0.6C2 0.6 0.6 2 0.6 4C0.6 6.2 4 10.6 4 10.6C4 10.6 7.4 6.2 7.4 4C7.4 2 6 0.6 4 0.6Z" fill="#d3d3d3"/><circle cx="4" cy="4" r="1.4" fill="#fff"/></svg>
<span class="t" style="left:635px;top:439.79px;font-size:13.1px;color:#1f6db3;font-weight:400;letter-spacing:0.15px">1367 N Willow Ave Minneapolis - Unit 4D</span>
<div style="left:1588px;top:442px;width:14px;height:2px;background:#d6d6d6"></div>
<div style="left:1588px;top:446px;width:14px;height:2px;background:#d6d6d6"></div>
<div style="left:1588px;top:451px;width:14px;height:2px;background:#d6d6d6"></div>
<div style="left:219px;top:476px;width:1410px;height:64px;background:#ffffff"></div>
<svg style="left:227px;top:502px;" width="12" height="12" viewBox="0 0 12 12"><rect x="0.5" y="0.5" width="10.6" height="10.6" rx="1.6" stroke="#8f8f8f" stroke-width="1" fill="none"/><path d="M5.8 2.2V9.4M2.2 5.8H9.4" stroke="#8f8f8f" stroke-width="1"/></svg>
<svg style="left:258px;top:496px;" width="24" height="24" viewBox="0 0 24 24"><circle cx="12" cy="12" r="12" fill="#d4d4d4"/><path d="M6.4 12.4L10.3 16.1L17.6 8.6" stroke="#fff" stroke-width="3.2" fill="none"/></svg>
<svg style="left:304px;top:499px;" width="15" height="15" viewBox="0 0 15 15"><path d="M7.5 1.2L9.3 5.4L13.9 5.8L10.4 8.8L11.5 13.3L7.5 10.9L3.5 13.3L4.6 8.8L1.1 5.8L5.7 5.4Z" stroke="#f2b810" stroke-width="1.3" fill="none" stroke-linejoin="round"/></svg>
<span class="t" style="left:366.5px;top:497.17px;font-size:14px;color:#555;letter-spacing:0.62px;width:248px;overflow:hidden;padding-bottom:4px">Provide Recommendations for I...</span>
<svg style="left:365.5px;top:516px;" width="7" height="12" viewBox="0 0 7 12"><path d="M4.2 0L0.6 6.2H3.2L1.6 12L6.4 4.6H3.8L5.6 0Z" fill="#c4c4c4"/></svg>
<span class="t" style="left:376px;top:515.58px;font-size:12.9px;color:#c2c2c2;letter-spacing:0.3px;width:239px;overflow:hidden;padding-bottom:4px">Perform Integrated Pest Management (Integrated</span>
<svg style="left:624px;top:504px;" width="8" height="11" viewBox="0 0 8 11"><path d="M4 0.6C2 0.6 0.6 2 0.6 4C0.6 6.2 4 10.6 4 10.6C4 10.6 7.4 6.2 7.4 4C7.4 2 6 0.6 4 0.6Z" fill="#d3d3d3"/><circle cx="4" cy="4" r="1.4" fill="#fff"/></svg>
<span class="t" style="left:635px;top:501.89px;font-size:13.1px;color:#1f6db3;font-weight:400;letter-spacing:0.15px">1367 N Willow Ave Minneapolis - Unit 3C</span>
<span class="t" style="left:1098.4px;top:501.89px;font-size:13.1px;color:#555;font-weight:400;letter-spacing:0.05px">Brian Sakevich</span>
<div style="left:1588px;top:502px;width:14px;height:2px;background:#d6d6d6"></div>
<div style="left:1588px;top:507px;width:14px;height:2px;background:#d6d6d6"></div>
<div style="left:1588px;top:512px;width:14px;height:2px;background:#d6d6d6"></div>
<div style="left:219px;top:540px;width:1410px;height:64px;background:#f2f2f2"></div>
<svg style="left:227px;top:566px;" width="12" height="12" viewBox="0 0 12 12"><rect x="0.5" y="0.5" width="10.6" height="10.6" rx="1.6" stroke="#8f8f8f" stroke-width="1" fill="none"/><path d="M5.8 2.2V9.4M2.2 5.8H9.4" stroke="#8f8f8f" stroke-width="1"/></svg>
<svg style="left:258px;top:560px;" width="24" height="24" viewBox="0 0 24 24"><circle cx="12" cy="12" r="12" fill="#d4d4d4"/><path d="M6.4 12.4L10.3 16.1L17.6 8.6" stroke="#fff" stroke-width="3.2" fill="none"/></svg>
<svg style="left:304px;top:563px;" width="15" height="15" viewBox="0 0 15 15"><path d="M7.5 1.2L9.3 5.4L13.9 5.8L10.4 8.8L11.5 13.3L7.5 10.9L3.5 13.3L4.6 8.8L1.1 5.8L5.7 5.4Z" stroke="#f2b810" stroke-width="1.3" fill="none" stroke-linejoin="round"/></svg>
<span class="t" style="left:366.5px;top:561.17px;font-size:14px;color:#555;letter-spacing:0.62px;width:248px;overflow:hidden;padding-bottom:4px">Upload Rental License</span>
<svg style="left:365.5px;top:580px;" width="7" height="12" viewBox="0 0 7 12"><path d="M4.2 0L0.6 6.2H3.2L1.6 12L6.4 4.6H3.8L5.6 0Z" fill="#c4c4c4"/></svg>
<span class="t" style="left:376px;top:579.58px;font-size:12.9px;color:#c2c2c2;letter-spacing:0.3px;width:239px;overflow:hidden;padding-bottom:4px">Obtain Overland Park, KS Rental License</span>
<svg style="left:624px;top:568px;" width="8" height="11" viewBox="0 0 8 11"><path d="M4 0.6C2 0.6 0.6 2 0.6 4C0.6 6.2 4 10.6 4 10.6C4 10.6 7.4 6.2 7.4 4C7.4 2 6 0.6 4 0.6Z" fill="#d3d3d3"/><circle cx="4" cy="4" r="1.4" fill="#fff"/></svg>
<span class="t" style="left:635px;top:565.89px;font-size:13.1px;color:#1f6db3;font-weight:400;letter-spacing:0.15px">5000 Indian Creek Pkwy Overland Park</span>
<span class="t" style="left:1098.4px;top:565.89px;font-size:13.1px;color:#555;font-weight:400;letter-spacing:0.05px">Brian Sakevich</span>
<div style="left:1588px;top:566px;width:14px;height:2px;background:#d6d6d6"></div>
<div style="left:1588px;top:571px;width:14px;height:2px;background:#d6d6d6"></div>
<div style="left:1588px;top:576px;width:14px;height:2px;background:#d6d6d6"></div>
<div style="left:219px;top:604px;width:1410px;height:64px;background:#ffffff"></div>
<svg style="left:227px;top:630px;" width="12" height="12" viewBox="0 0 12 12"><rect x="0.5" y="0.5" width="10.6" height="10.6" rx="1.6" stroke="#8f8f8f" stroke-width="1" fill="none"/><path d="M5.8 2.2V9.4M2.2 5.8H9.4" stroke="#8f8f8f" stroke-width="1"/></svg>
<svg style="left:258px;top:624px;" width="24" height="24" viewBox="0 0 24 24"><circle cx="12" cy="12" r="12" fill="#d4d4d4"/><path d="M6.4 12.4L10.3 16.1L17.6 8.6" stroke="#fff" stroke-width="3.2" fill="none"/></svg>
<svg style="left:304px;top:627px;" width="15" height="15" viewBox="0 0 15 15"><path d="M7.5 1.2L9.3 5.4L13.9 5.8L10.4 8.8L11.5 13.3L7.5 10.9L3.5 13.3L4.6 8.8L1.1 5.8L5.7 5.4Z" stroke="#f2b810" stroke-width="1.3" fill="none" stroke-linejoin="round"/></svg>
<span class="t" style="left:366.5px;top:625.17px;font-size:14px;color:#555;letter-spacing:0.62px;width:248px;overflow:hidden;padding-bottom:4px">Pay Invoice</span>
<svg style="left:365.5px;top:644px;" width="7" height="12" viewBox="0 0 7 12"><path d="M4.2 0L0.6 6.2H3.2L1.6 12L6.4 4.6H3.8L5.6 0Z" fill="#c4c4c4"/></svg>
<span class="t" style="left:376px;top:643.58px;font-size:12.9px;color:#c2c2c2;letter-spacing:0.3px;width:239px;overflow:hidden;padding-bottom:4px">Obtain Overland Park, KS Rental License</span>
<svg style="left:624px;top:632px;" width="8" height="11" viewBox="0 0 8 11"><path d="M4 0.6C2 0.6 0.6 2 0.6 4C0.6 6.2 4 10.6 4 10.6C4 10.6 7.4 6.2 7.4 4C7.4 2 6 0.6 4 0.6Z" fill="#d3d3d3"/><circle cx="4" cy="4" r="1.4" fill="#fff"/></svg>
<span class="t" style="left:635px;top:629.89px;font-size:13.1px;color:#1f6db3;font-weight:400;letter-spacing:0.15px">5000 Indian Creek Pkwy Overland Park</span>
<span class="t" style="left:1098.4px;top:629.89px;font-size:13.1px;color:#555;font-weight:400;letter-spacing:0.05px">Brian Sakevich</span>
<span class="t" style="left:1242.5px;top:629.89px;font-size:13.1px;color:#555;font-weight:400;letter-spacing:0.25px">Due 3/16/2019</span>
<div style="left:1588px;top:630px;width:14px;height:2px;background:#d6d6d6"></div>
<div style="left:1588px;top:635px;width:14px;height:2px;background:#d6d6d6"></div>
<div style="left:1588px;top:640px;width:14px;height:2px;background:#d6d6d6"></div>
<div style="left:219px;top:668px;width:1410px;height:64px;background:#f2f2f2"></div>
<svg style="left:227px;top:694px;" width="12" height="12" viewBox="0 0 12 12"><rect x="0.5" y="0.5" width="10.6" height="10.6" rx="1.6" stroke="#8f8f8f" stroke-width="1" fill="none"/><path d="M5.8 2.2V9.4M2.2 5.8H9.4" stroke="#8f8f8f" stroke-width="1"/></svg>
<svg style="left:258px;top:688px;" width="24" height="24" viewBox="0 0 24 24"><circle cx="12" cy="12" r="12" fill="#d4d4d4"/><path d="M6.4 12.4L10.3 16.1L17.6 8.6" stroke="#fff" stroke-width="3.2" fill="none"/></svg>
<svg style="left:304px;top:691px;" width="15" height="15" viewBox="0 0 15 15"><path d="M7.5 1.2L9.3 5.4L13.9 5.8L10.4 8.8L11.5 13.3L7.5 10.9L3.5 13.3L4.6 8.8L1.1 5.8L5.7 5.4Z" stroke="#f2b810" stroke-width="1.3" fill="none" stroke-linejoin="round"/></svg>
<span class="t" style="left:366.5px;top:689.17px;font-size:14px;color:#555;letter-spacing:0.62px;width:248px;overflow:hidden;padding-bottom:4px">Apply for Rental License</span>
<svg style="left:365.5px;top:708px;" width="7" height="12" viewBox="0 0 7 12"><path d="M4.2 0L0.6 6.2H3.2L1.6 12L6.4 4.6H3.8L5.6 0Z" fill="#c4c4c4"/></svg>
<span class="t" style="left:376px;top:707.58px;font-size:12.9px;color:#c2c2c2;letter-spacing:0.3px;width:239px;overflow:hidden;padding-bottom:4px">Obtain Overland Park, KS Rental License</span>
<svg style="left:624px;top:696px;" width="8" height="11" viewBox="0 0 8 11"><path d="M4 0.6C2 0.6 0.6 2 0.6 4C0.6 6.2 4 10.6 4 10.6C4 10.6 7.4 6.2 7.4 4C7.4 2 6 0.6 4 0.6Z" fill="#d3d3d3"/><circle cx="4" cy="4" r="1.4" fill="#fff"/></svg>
<span class="t" style="left:635px;top:693.89px;font-size:13.1px;color:#1f6db3;font-weight:400;letter-spacing:0.15px">5000 Indian Creek Pkwy Overland Park</span>
<span class="t" style="left:1098.4px;top:693.89px;font-size:13.1px;color:#555;font-weight:400;letter-spacing:0.05px">Brian Sakevich</span>
<div style="left:1588px;top:694px;width:14px;height:2px;background:#d6d6d6"></div>
<div style="left:1588px;top:699px;width:14px;height:2px;background:#d6d6d6"></div>
<div style="left:1588px;top:704px;width:14px;height:2px;background:#d6d6d6"></div>
<div style="left:219px;top:732px;width:1410px;height:64px;background:#ffffff"></div>
<svg style="left:227px;top:758px;" width="12" height="12" viewBox="0 0 12 12"><rect x="0.5" y="0.5" width="10.6" height="10.6" rx="1.6" stroke="#8f8f8f" stroke-width="1" fill="none"/><path d="M5.8 2.2V9.4M2.2 5.8H9.4" stroke="#8f8f8f" stroke-width="1"/></svg>
<svg style="left:258px;top:752px;" width="24" height="24" viewBox="0 0 24 24"><circle cx="12" cy="12" r="12" fill="#d4d4d4"/><path d="M6.4 12.4L10.3 16.1L17.6 8.6" stroke="#fff" stroke-width="3.2" fill="none"/></svg>
<svg style="left:304px;top:755px;" width="15" height="15" viewBox="0 0 15 15"><path d="M7.5 1.2L9.3 5.4L13.9 5.8L10.4 8.8L11.5 13.3L7.5 10.9L3.5 13.3L4.6 8.8L1.1 5.8L5.7 5.4Z" stroke="#f2b810" stroke-width="1.3" fill="none" stroke-linejoin="round"/></svg>
<span class="t" style="left:366.5px;top:753.17px;font-size:14px;color:#555;letter-spacing:0.62px;width:248px;overflow:hidden;padding-bottom:4px">Upload Rental License</span>
<svg style="left:365.5px;top:772px;" width="7" height="12" viewBox="0 0 7 12"><path d="M4.2 0L0.6 6.2H3.2L1.6 12L6.4 4.6H3.8L5.6 0Z" fill="#c4c4c4"/></svg>
<span class="t" style="left:376px;top:771.58px;font-size:12.9px;color:#c2c2c2;letter-spacing:0.3px;width:239px;overflow:hidden;padding-bottom:4px">Obtain Overland Park, KS Rental License</span>
<svg style="left:624px;top:760px;" width="8" height="11" viewBox="0 0 8 11"><path d="M4 0.6C2 0.6 0.6 2 0.6 4C0.6 6.2 4 10.6 4 10.6C4 10.6 7.4 6.2 7.4 4C7.4 2 6 0.6 4 0.6Z" fill="#d3d3d3"/><circle cx="4" cy="4" r="1.4" fill="#fff"/></svg>
<span class="t" style="left:635px;top:757.89px;font-size:13.1px;color:#1f6db3;font-weight:400;letter-spacing:0.15px">5000 Indian Creek Pkwy Overland Park</span>
<span class="t" style="left:1098.4px;top:757.89px;font-size:13.1px;color:#555;font-weight:400;letter-spacing:0.05px">Brian Sakevich</span>
<div style="left:1588px;top:758px;width:14px;height:2px;background:#d6d6d6"></div>
<div style="left:1588px;top:763px;width:14px;height:2px;background:#d6d6d6"></div>
<div style="left:1588px;top:768px;width:14px;height:2px;background:#d6d6d6"></div>
<svg style="left:1426px;top:756px;" width="14" height="17" viewBox="0 0 14 17"><path d="M0.8 2.5H13.2V13.5L10.5 16.2H0.8Z" fill="#f6ec8e" stroke="#9e9a4a" stroke-width="0.9"/><path d="M10.5 16.2V13.5H13.2" fill="#d9cf6a" stroke="#9e9a4a" stroke-width="0.8"/><circle cx="7" cy="2.2" r="1.6" fill="#e8363c"/><path d="M6 7.5L7.5 6.3V13" stroke="#666" stroke-width="1" fill="none"/></svg>
<div style="left:219px;top:796px;width:1410px;height:64px;background:#f2f2f2"></div>
<svg style="left:227px;top:822px;" width="12" height="12" viewBox="0 0 12 12"><rect x="0.5" y="0.5" width="10.6" height="10.6" rx="1.6" stroke="#8f8f8f" stroke-width="1" fill="none"/><path d="M5.8 2.2V9.4M2.2 5.8H9.4" stroke="#8f8f8f" stroke-width="1"/></svg>
<svg style="left:258px;top:816px;" width="24" height="24" viewBox="0 0 24 24"><circle cx="12" cy="12" r="12" fill="#d4d4d4"/><path d="M6.4 12.4L10.3 16.1L17.6 8.6" stroke="#fff" stroke-width="3.2" fill="none"/></svg>
<svg style="left:304px;top:819px;" width="15" height="15" viewBox="0 0 15 15"><path d="M7.5 1.2L9.3 5.4L13.9 5.8L10.4 8.8L11.5 13.3L7.5 10.9L3.5 13.3L4.6 8.8L1.1 5.8L5.7 5.4Z" stroke="#f2b810" stroke-width="1.3" fill="none" stroke-linejoin="round"/></svg>
<span class="t" style="left:366.5px;top:817.17px;font-size:14px;color:#555;letter-spacing:0.62px;width:248px;overflow:hidden;padding-bottom:4px">Pay Invoice</span>
<svg style="left:365.5px;top:836px;" width="7" height="12" viewBox="0 0 7 12"><path d="M4.2 0L0.6 6.2H3.2L1.6 12L6.4 4.6H3.8L5.6 0Z" fill="#c4c4c4"/></svg>
<span class="t" style="left:376px;top:835.58px;font-size:12.9px;color:#c2c2c2;letter-spacing:0.3px;width:239px;overflow:hidden;padding-bottom:4px">Obtain Overland Park, KS Rental License</span>
<svg style="left:624px;top:824px;" width="8" height="11" viewBox="0 0 8 11"><path d="M4 0.6C2 0.6 0.6 2 0.6 4C0.6 6.2 4 10.6 4 10.6C4 10.6 7.4 6.2 7.4 4C7.4 2 6 0.6 4 0.6Z" fill="#d3d3d3"/><circle cx="4" cy="4" r="1.4" fill="#fff"/></svg>
<span class="t" style="left:635px;top:821.89px;font-size:13.1px;color:#1f6db3;font-weight:400;letter-spacing:0.15px">5000 Indian Creek Pkwy Overland Park</span>
<span class="t" style="left:1098.4px;top:821.89px;font-size:13.1px;color:#555;font-weight:400;letter-spacing:0.05px">Brian Sakevich</span>
<div style="left:1588px;top:822px;width:14px;height:2px;background:#d6d6d6"></div>
<div style="left:1588px;top:827px;width:14px;height:2px;background:#d6d6d6"></div>
<div style="left:1588px;top:832px;width:14px;height:2px;background:#d6d6d6"></div>
<div style="left:219px;top:860px;width:1410px;height:64px;background:#ffffff"></div>
<svg style="left:227px;top:886px;" width="12" height="12" viewBox="0 0 12 12"><rect x="0.5" y="0.5" width="10.6" height="10.6" rx="1.6" stroke="#8f8f8f" stroke-width="1" fill="none"/><path d="M5.8 2.2V9.4M2.2 5.8H9.4" stroke="#8f8f8f" stroke-width="1"/></svg>
<svg style="left:258px;top:880px;" width="24" height="24" viewBox="0 0 24 24"><circle cx="12" cy="12" r="12" fill="#d4d4d4"/><path d="M6.4 12.4L10.3 16.1L17.6 8.6" stroke="#fff" stroke-width="3.2" fill="none"/></svg>
<svg style="left:304px;top:883px;" width="15" height="15" viewBox="0 0 15 15"><path d="M7.5 1.2L9.3 5.4L13.9 5.8L10.4 8.8L11.5 13.3L7.5 10.9L3.5 13.3L4.6 8.8L1.1 5.8L5.7 5.4Z" stroke="#f2b810" stroke-width="1.3" fill="none" stroke-linejoin="round"/></svg>
<span class="t" style="left:366.5px;top:881.17px;font-size:14px;color:#555;letter-spacing:0.62px;width:248px;overflow:hidden;padding-bottom:4px">Apply for Rental License</span>
<svg style="left:365.5px;top:900px;" width="7" height="12" viewBox="0 0 7 12"><path d="M4.2 0L0.6 6.2H3.2L1.6 12L6.4 4.6H3.8L5.6 0Z" fill="#c4c4c4"/></svg>
<span class="t" style="left:376px;top:899.58px;font-size:12.9px;color:#c2c2c2;letter-spacing:0.3px;width:239px;overflow:hidden;padding-bottom:4px">Obtain Overland Park, KS Rental License</span>
<svg style="left:624px;top:888px;" width="8" height="11" viewBox="0 0 8 11"><path d="M4 0.6C2 0.6 0.6 2 0.6 4C0.6 6.2 4 10.6 4 10.6C4 10.6 7.4 6.2 7.4 4C7.4 2 6 0.6 4 0.6Z" fill="#d3d3d3"/><circle cx="4" cy="4" r="1.4" fill="#fff"/></svg>
<span class="t" style="left:635px;top:885.89px;font-size:13.1px;color:#1f6db3;font-weight:400;letter-spacing:0.15px">5000 Indian Creek Pkwy Overland Park</span>
<span class="t" style="left:1098.4px;top:885.89px;font-size:13.1px;color:#555;font-weight:400;letter-spacing:0.05px">Brian Sakevich</span>
<div style="left:1588px;top:886px;width:14px;height:2px;background:#d6d6d6"></div>
<div style="left:1588px;top:891px;width:14px;height:2px;background:#d6d6d6"></div>
<div style="left:1588px;top:896px;width:14px;height:2px;background:#d6d6d6"></div>
<div style="left:219px;top:924px;width:1410px;height:57px;background:#f2f2f2"></div>
<svg style="left:227px;top:946px;" width="12" height="12" viewBox="0 0 12 12"><rect x="0.5" y="0.5" width="10.6" height="10.6" rx="1.6" stroke="#8f8f8f" stroke-width="1" fill="none"/><path d="M5.8 2.2V9.4M2.2 5.8H9.4" stroke="#8f8f8f" stroke-width="1"/></svg>
<svg style="left:258px;top:940px;" width="24" height="24" viewBox="0 0 24 24"><circle cx="12" cy="12" r="12" fill="#d4d4d4"/><path d="M6.5 7.5H7.8M6.5 10.5H7.8M6.5 13.5H7.8M6.5 16.5H7.8M9.5 7.5H17.5M9.5 10.5H17.5M9.5 13.5H17.5M9.5 16.5H17.5" stroke="#fff" stroke-width="1.8"/></svg>
<svg style="left:304px;top:943px;" width="15" height="15" viewBox="0 0 15 15"><path d="M7.5 1.2L9.3 5.4L13.9 5.8L10.4 8.8L11.5 13.3L7.5 10.9L3.5 13.3L4.6 8.8L1.1 5.8L5.7 5.4Z" stroke="#f2b810" stroke-width="1.3" fill="none" stroke-linejoin="round"/></svg>
<span class="t" style="left:366.5px;top:945.17px;font-size:14px;color:#555;letter-spacing:0.62px;width:248px;overflow:hidden;padding-bottom:4px">Boiler Monthly Inspection Inspec...</span>
<svg style="left:624px;top:946px;" width="8" height="11" viewBox="0 0 8 11"><path d="M4 0.6C2 0.6 0.6 2 0.6 4C0.6 6.2 4 10.6 4 10.6C4 10.6 7.4 6.2 7.4 4C7.4 2 6 0.6 4 0.6Z" fill="#d3d3d3"/><circle cx="4" cy="4" r="1.4" fill="#fff"/></svg>
<span class="t" style="left:635px;top:944.79px;font-size:13.1px;color:#1f6db3;font-weight:400;letter-spacing:0.15px">150 3rd Ave S Nashville</span>
<div style="left:1588px;top:947px;width:14px;height:2px;background:#d6d6d6"></div>
<div style="left:1588px;top:951px;width:14px;height:2px;background:#d6d6d6"></div>
<div style="left:1588px;top:956px;width:14px;height:2px;background:#d6d6d6"></div>
<div style="left:219px;top:981px;width:1410px;height:20px;background:#ffffff"></div>
<div style="left:1630px;top:61px;width:278px;height:940px;background:#fff"></div>
<div style="left:1629px;top:61px;width:1px;height:42px;background:#dcdcdc"></div>
<div style="left:1629px;top:103px;width:20px;height:1px;background:#dcdcdc"></div>
<div style="left:1629px;top:104px;width:19px;height:897px;background:#f9f9f9"></div>
<div style="left:1629px;top:154px;width:1px;height:847px;background:#dadada"></div>
<div style="left:1648px;top:103px;width:1px;height:898px;background:#dcdcdc"></div>
<svg style="left:1635px;top:76px;" width="8" height="12" viewBox="0 0 8 12"><path d="M1.5 1L6.5 6L1.5 11" stroke="#9a9a9a" stroke-width="2.2" fill="none"/></svg>
<span class="t" style="left:1664.4px;top:79.16px;font-size:14.1px;color:#444;font-weight:400;letter-spacing:-0.1px">UPCOMING</span>
<div style="left:1664px;top:104px;width:190px;height:1px;background:#e3e3e3"></div>
<span class="t" style="left:1664.2px;top:117.83px;font-size:13.2px;color:#9b9b9b;font-weight:400;letter-spacing:0.3px">You have no upcoming events,</span>
<span class="t" style="left:1664.2px;top:135.83px;font-size:13.2px;color:#9b9b9b;font-weight:400;letter-spacing:0.3px">enjoy your day!</span>
<div style="left:1868px;top:61px;width:40px;height:168px;background:#e2e6e9;border-bottom-left-radius:9px"></div>
<div style="left:1868px;top:61px;width:40px;height:42px;background:#1168b3"></div>
<svg style="left:1879px;top:73px;" width="17" height="18" viewBox="0 0 17 18"><rect x="1" y="3.5" width="15" height="13.5" rx="1" stroke="#fff" stroke-width="1.6" fill="none"/><path d="M1 6.3H16" stroke="#fff" stroke-width="1.6"/><path d="M4.8 0.8V4.5M12.2 0.8V4.5" stroke="#fff" stroke-width="1.8"/></svg>
<svg style="left:1879px;top:117px;" width="17" height="16" viewBox="0 0 17 16"><path d="M8.5 1.2L10.6 5.9L15.7 6.4L11.8 9.8L13 14.8L8.5 12.2L4 14.8L5.2 9.8L1.3 6.4L6.4 5.9Z" stroke="#222" stroke-width="1.4" fill="none" stroke-linejoin="round"/></svg>
<svg style="left:1879px;top:160px;" width="16" height="13" viewBox="0 0 16 13"><path d="M1.5 6.5L6 11L14.5 2.5" stroke="#222" stroke-width="3" fill="none"/></svg>
<div style="left:1885px;top:146px;width:20px;height:19px;background:#d11c1c;border-radius:50%"></div>
<span class="t" style="left:1891.3px;top:149.63px;font-size:12px;color:#fff;font-weight:700;">3</span>
<svg style="left:1878px;top:200px;" width="20" height="17" viewBox="0 0 20 17"><circle cx="10" cy="4" r="3.2" fill="#222"/><circle cx="4.2" cy="6.6" r="2.5" fill="#222"/><circle cx="15.8" cy="6.6" r="2.5" fill="#222"/><path d="M4 16V12.3C4 9.6 6.2 8.4 10 8.4C13.8 8.4 16 9.6 16 12.3V16Z" fill="#222"/></svg>
<div style="left:1878px;top:189px;width:28px;height:18px;background:#d11c1c;border-radius:9px"></div>
<span class="t" style="left:1884.3px;top:191.86px;font-size:12.6px;color:#fff;font-weight:700;letter-spacing:-0.2px">21</span>
<div style="left:1751px;top:943px;width:136px;height:46px;background:#1168b3;border-radius:23px"></div>
<svg style="left:1773px;top:956px;" width="20" height="21" viewBox="0 0 20 21"><path d="M10 1.3C5.2 1.3 1.6 4.7 1.6 9C1.6 11.2 2.5 13.1 4 14.5L2.3 19.2L7.6 16.4C8.4 16.6 9.2 16.7 10 16.7C14.8 16.7 18.4 13.3 18.4 9C18.4 4.7 14.8 1.3 10 1.3Z" stroke="#fff" stroke-width="2" fill="none" stroke-linejoin="round"/></svg>
<span class="t" style="left:1801.5px;top:958.66px;font-size:15.6px;color:#fff;font-weight:700;letter-spacing:0.35px">Support</span>
<svg style="left:180px;top:85px;" width="70" height="90" viewBox="0 0 70 90"><path d="M191.3 93.6L227.5 148.5" stroke="#ff2200" stroke-width="5.2" stroke-linecap="butt" transform="translate(-180 -85)"/><path d="M212.8 151.9L236.2 136.6L238.9 167.2Z" fill="#ff2200" transform="translate(-180 -85)"/></svg></body></html>
